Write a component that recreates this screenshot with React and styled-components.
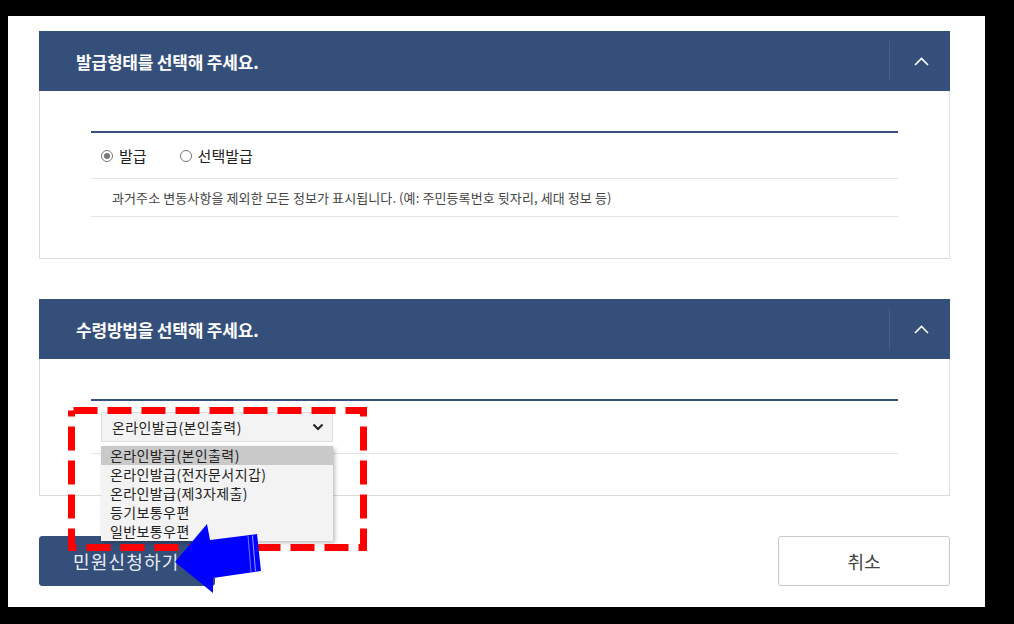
import React from "react";
import styled, { createGlobalStyle } from "styled-components";

const Global = createGlobalStyle`
  html, body { margin: 0; padding: 0; background: #000; }
  body { font-family: "Noto Sans CJK KR", "Noto Sans", sans-serif; }
  * { box-sizing: border-box; }
`;

const Page = styled.div`
  position: relative;
  margin: 16px 0 0 8px;
  width: 977px;
  height: 591px;
  background: #fff;
  padding: 15px 35px 0 31px;
`;

const Panel = styled.section`
  border: 1px solid #dcdcdc;
  border-top: none;
  margin-bottom: ${(p) => p.$mb || 0}px;
`;

const Header = styled.div`
  height: 60px;
  margin: 0 -1px;
  background: #354f7b;
  display: flex;
  align-items: center;
  justify-content: space-between;
  padding-left: 37px;
`;

const Title = styled.h2`
  margin: 0;
  color: #fff;
  font-size: 17px;
  font-weight: 700;
  letter-spacing: -0.2px;
`;

const Toggle = styled.div`
  width: 61px;
  height: 40px;
  border-left: 1px solid rgba(255, 255, 255, 0.1);
  display: flex;
  align-items: center;
  justify-content: center;
  padding-left: 3px;
`;

const Body = styled.div`
  padding: 40px 51px 41px 51px;
`;

const Table = styled.div`
  border-top: 2px solid #3a5080;
`;

const Row = styled.div`
  border-bottom: 1px solid #e3e3e3;
  display: flex;
  align-items: center;
  height: ${(p) => p.$h}px;
  padding-left: ${(p) => p.$pl || 10}px;
  position: relative;
`;

const RadioItem = styled.label`
  display: inline-flex;
  align-items: center;
  gap: 6px;
  font-size: 15px;
  color: #222;
  margin-right: ${(p) => p.$mr || 0}px;
`;

const RadioDot = styled.span`
  width: 12px;
  height: 12px;
  border-radius: 50%;
  border: 1px solid #777;
  display: inline-flex;
  align-items: center;
  justify-content: center;
  &::after {
    content: "";
    width: 6px;
    height: 6px;
    border-radius: 50%;
    background: ${(p) => (p.$on ? "#777" : "transparent")};
  }
`;

const Desc = styled.p`
  margin: 0;
  font-size: 13px;
  color: #444;
  letter-spacing: 0.1px;
`;

const SelectWrap = styled.div`
  position: relative;
  width: 232px;
`;

const SelectBox = styled.div`
  height: 30px;
  background: #f3f3f3;
  border: 1px solid #dedede;
  display: flex;
  align-items: center;
  justify-content: space-between;
  padding: 0 8px 0 10px;
  font-size: 14px;
  letter-spacing: 0.4px;
  color: #222;
`;

const DropList = styled.ul`
  position: absolute;
  left: 0;
  top: 34px;
  width: 232px;
  margin: 0;
  padding: 0;
  list-style: none;
  background: #f3f3f3;
  box-shadow: 2px 2px 4px rgba(0, 0, 0, 0.25);
  z-index: 2;
`;

const DropItem = styled.li`
  height: 19px;
  line-height: 19px;
  padding-left: 9px;
  font-size: 14px;
  letter-spacing: 0.4px;
  color: #222;
  background: ${(p) => (p.$active ? "#c9c9c9" : "transparent")};
`;

const Buttons = styled.div`
  margin-top: 40px;
  display: flex;
  justify-content: space-between;
`;

const Button = styled.button`
  height: 50px;
  width: ${(p) => p.$w}px;
  border-radius: 3px;
  font-family: inherit;
  font-size: 18px;
  font-weight: 400;
  letter-spacing: ${(p) => (p.$primary ? "1.2px" : "0")};
  display: flex;
  align-items: center;
  justify-content: ${(p) => (p.$primary ? "flex-start" : "center")};
  padding: ${(p) => (p.$primary ? "0 0 0 33px" : "0")};
  background: ${(p) => (p.$primary ? "#354f7b" : "#fff")};
  color: ${(p) => (p.$primary ? "#e9edf3" : "#444")};
  border: 1px solid ${(p) => (p.$primary ? "#354f7b" : "#c9c9c9")};
`;

const Overlay = styled.svg`
  position: absolute;
  left: -8px;
  top: -16px;
  width: 1014px;
  height: 624px;
  pointer-events: none;
  z-index: 5;
`;

const Chevron = () => (
  <svg width="15" height="9" viewBox="0 0 15 9">
    <polyline points="1,8 7.5,1.5 14,8" fill="none" stroke="#fff" strokeWidth="1.6" />
  </svg>
);

const SelChevron = () => (
  <svg width="12" height="8" viewBox="0 0 12 8">
    <polyline points="1.5,1.5 6,6 10.5,1.5" fill="none" stroke="#222" strokeWidth="2" />
  </svg>
);

const options = [
  "온라인발급(본인출력)",
  "온라인발급(전자문서지갑)",
  "온라인발급(제3자제출)",
  "등기보통우편",
  "일반보통우편",
];

export default function App() {
  return (
    <>
      <Global />
      <Page>
        <Panel $mb={40}>
          <Header>
            <Title>발급형태를 선택해 주세요.</Title>
            <Toggle>
              <Chevron />
            </Toggle>
          </Header>
          <Body>
            <Table>
              <Row $h={46}>
                <RadioItem $mr={33}>
                  <RadioDot $on />
                  발급
                </RadioItem>
                <RadioItem>
                  <RadioDot />
                  선택발급
                </RadioItem>
              </Row>
              <Row $h={38} $pl={21}>
                <Desc>
                  과거주소 변동사항을 제외한 모든 정보가 표시됩니다. (예: 주민등록번호 뒷자리, 세대 정보 등)
                </Desc>
              </Row>
            </Table>
          </Body>
        </Panel>

        <Panel>
          <Header>
            <Title>수령방법을 선택해 주세요.</Title>
            <Toggle>
              <Chevron />
            </Toggle>
          </Header>
          <Body>
            <Table>
              <Row $h={53}>
                <SelectWrap>
                  <SelectBox>
                    온라인발급(본인출력)
                    <SelChevron />
                  </SelectBox>
                  <DropList>
                    {options.map((o, i) => (
                      <DropItem key={o} $active={i === 0}>
                        {o}
                      </DropItem>
                    ))}
                  </DropList>
                </SelectWrap>
              </Row>
            </Table>
          </Body>
        </Panel>

        <Buttons>
          <Button $primary $w={176}>민원신청하기</Button>
          <Button $w={172}>취소</Button>
        </Buttons>

        <Overlay viewBox="0 0 1014 624">
          <rect
            x="71.5"
            y="410.5"
            width="292"
            height="137"
            fill="none"
            stroke="#ff0000"
            strokeWidth="7"
            strokeDasharray="24 10"
            strokeDashoffset="-2"
          />
          <polygon
            points="175,562 207,524 210,540 257,534 261,571 213,578 213,593"
            fill="#0000ff"
          />
          <line x1="248" y1="536" x2="251" y2="572" stroke="#8f8fff" strokeWidth="0.8" />
          <line x1="252.5" y1="535.5" x2="255.5" y2="571.5" stroke="#c0c0ff" strokeWidth="0.8" />
        </Overlay>
      </Page>
    </>
  );
}
